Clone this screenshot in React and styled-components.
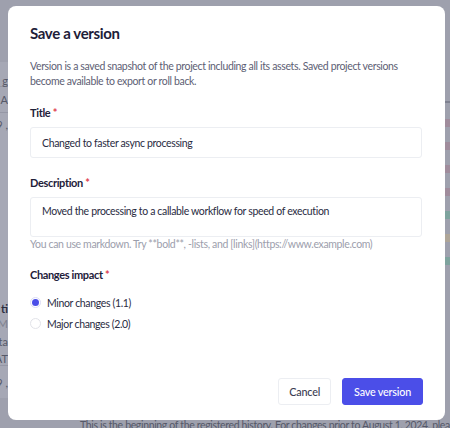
import React, { useState } from "react";
import styled, { createGlobalStyle } from "styled-components";

const Global = createGlobalStyle`
  html, body { margin: 0; padding: 0; }
  body {
    width: 450px; height: 428px; overflow: hidden;
    background: #9ea0ad;
    font-family: "Lato", "Noto Sans", sans-serif;
  }
  * { box-sizing: border-box; }
`;

const Page = styled.div`
  position: relative;
  width: 450px;
  height: 428px;
  overflow: hidden;
  background: #9ea0ad;
`;

const BackPanel = styled.div`
  position: absolute;
  left: -200px;
  top: 62px;
  width: 208px;
  display: flex;
  flex-direction: column;
  background: #a6a8b5;
  font-size: 11px;
  color: #565968;
`;

const BackRow = styled.div`
  height: ${(p) => p.$h}px;
  display: flex;
  align-items: center;
  justify-content: flex-end;
  font-weight: ${(p) => (p.$bold ? 700 : 400)};
  color: ${(p) => (p.$bold ? "#2c2e40" : p.$light ? "#7d7f8d" : "#565968")};
  border-bottom: ${(p) => (p.$line ? "1px solid #9597a5" : "none")};
`;

const BackFooter = styled.div`
  position: absolute;
  left: 80px;
  top: 419px;
  white-space: nowrap;
  font-size: 10.5px;
  letter-spacing: -0.35px;
  color: #555868;
`;

const RightStrip = styled.div`
  position: absolute;
  left: 444px;
  top: 101px;
  width: 10px;
  display: flex;
  flex-direction: column;
`;

const Tag = styled.div`
  height: ${(p) => p.$h || 8}px;
  margin-top: ${(p) => p.$mt}px;
  background: ${(p) => p.$c};
`;

const Modal = styled.div`
  position: absolute;
  left: 8px;
  top: 6px;
  width: 437px;
  height: 414px;
  background: #ffffff;
  border-radius: 8px;
  padding: 17px 22px 15px 22px;
  display: flex;
  flex-direction: column;
  color: #1e2039;
  font-size: 10.5px;
  letter-spacing: -0.35px;
`;

const Title = styled.h2`
  margin: 0;
  font-size: 15px;
  font-weight: 700;
  letter-spacing: -0.35px;
  line-height: 20px;
  color: #1e2039;
`;

const Intro = styled.p`
  margin: 16px 0 0 0;
  line-height: 15px;
  color: #5d6074;
`;

const Field = styled.div`
  margin-top: ${(p) => p.$mt}px;
  display: flex;
  flex-direction: column;
`;

const Label = styled.label`
  font-size: 11px;
  font-weight: 700;
  line-height: 14px;
  color: #1e2039;
  span { color: #e0414f; }
`;

const Input = styled.div`
  margin-top: 7px;
  width: 392px;
  height: ${(p) => p.$h}px;
  border: 1px solid #eceef2;
  border-radius: 3px;
  padding: ${(p) => p.$pt}px 11px 0 11px;
  line-height: 14px;
  color: #2a2c42;
`;

const Help = styled.div`
  line-height: 14px;
  color: #9c9eac;
`;

const Radios = styled.div`
  margin-top: 14px;
  display: flex;
  flex-direction: column;
  gap: 8px;
`;

const RadioRow = styled.div`
  display: flex;
  align-items: center;
  gap: 6px;
  height: 13px;
  color: #2a2c42;
  cursor: pointer;
`;

const Dot = styled.span`
  width: 11px;
  height: 11px;
  border-radius: 50%;
  border: 1px solid ${(p) => (p.$on ? "#dcdcf6" : "#e2e3e9")};
  background: #fff;
  display: flex;
  align-items: center;
  justify-content: center;
  &::after {
    content: "";
    width: 7px;
    height: 7px;
    border-radius: 50%;
    background: ${(p) => (p.$on ? "#4a4de8" : "transparent")};
  }
`;

const Footer = styled.div`
  margin-top: auto;
  display: flex;
  justify-content: flex-end;
  gap: 11px;
`;

const Button = styled.button`
  height: 27px;
  padding: 0 ${(p) => (p.$primary ? 11 : 10)}px;
  border-radius: 3px;
  font-family: inherit;
  font-size: 10.8px;
  letter-spacing: -0.2px;
  font-weight: 500;
  border: 1px solid ${(p) => (p.$primary ? "#4b4ee8" : "#eceef2")};
  background: ${(p) => (p.$primary ? "#4b4ee8" : "#ffffff")};
  color: ${(p) => (p.$primary ? "#ffffff" : "#3a3c52")};
  cursor: pointer;
`;

export default function App() {
  const [impact, setImpact] = useState("minor");
  return (
    <Page>
      <Global />
      <BackPanel>
        <BackRow $h={13} />
        <BackRow $h={12} $line>g</BackRow>
        <BackRow $h={26} $line>A</BackRow>
        <BackRow $h={22}>9 ,</BackRow>
        <BackRow $h={165} />
        <BackRow $h={16} $bold>ti</BackRow>
        <BackRow $h={14} $light>M</BackRow>
        <BackRow $h={22}>ta</BackRow>
        <BackRow $h={14} $line>AT</BackRow>
        <BackRow $h={32}>9 ,</BackRow>
      </BackPanel>
      <RightStrip>
        <Tag $mt={0} $h={2} $c="#7f8190" />
        <Tag $mt={16} $c="#a08c9c" />
        <Tag $mt={15} $c="#a08c9c" />
        <Tag $mt={15} $c="#a08c9c" />
        <Tag $mt={15} $c="#a08c9c" />
        <Tag $mt={15} $c="#7ea39e" />
        <Tag $mt={15} $c="#aea598" />
        <Tag $mt={15} $c="#7ea39e" />
      </RightStrip>
      <BackFooter>
        This is the beginning of the registered history. For changes prior to August 1, 2024, please
      </BackFooter>
      <Modal role="dialog">
        <Title>Save a version</Title>
        <Intro>
          Version is a saved snapshot of the project including all its assets. Saved project versions
          become available to export or roll back.
        </Intro>
        <Field $mt={17}>
          <Label>
            Title <span>*</span>
          </Label>
          <Input $h={31} $pt={8}>Changed to faster async processing</Input>
        </Field>
        <Field $mt={18}>
          <Label>
            Description <span>*</span>
          </Label>
          <Input $h={40} $pt={6}>
            Moved the processing to a callable workflow for speed of execution
          </Input>
          <Help>You can use markdown. Try **bold**, -lists, and [links](https://www.example.com)</Help>
        </Field>
        <Field $mt={17}>
          <Label>
            Changes impact <span>*</span>
          </Label>
          <Radios>
            <RadioRow onClick={() => setImpact("minor")}>
              <Dot $on={impact === "minor"} />
              Minor changes (1.1)
            </RadioRow>
            <RadioRow onClick={() => setImpact("major")}>
              <Dot $on={impact === "major"} />
              Major changes (2.0)
            </RadioRow>
          </Radios>
        </Field>
        <Footer>
          <Button>Cancel</Button>
          <Button $primary>Save version</Button>
        </Footer>
      </Modal>
    </Page>
  );
}
